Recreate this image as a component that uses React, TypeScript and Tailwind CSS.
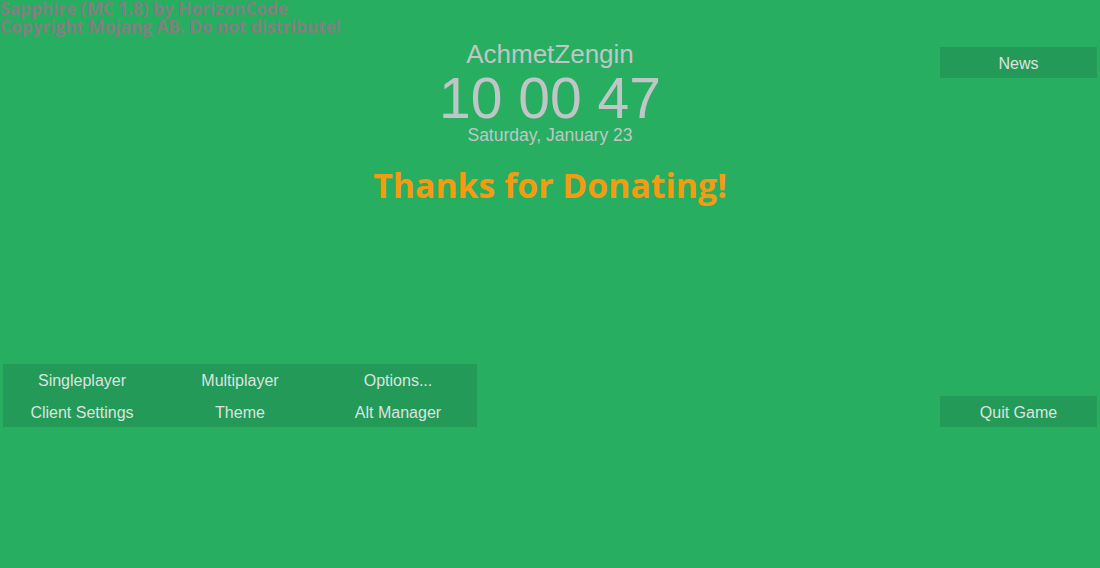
const menuItems = [
  "Singleplayer",
  "Multiplayer",
  "Options...",
  "Client Settings",
  "Theme",
  "Alt Manager",
];

function MenuButton({ label, className = "" }: { label: string; className?: string }) {
  return (
    <button
      className={`flex items-center justify-center bg-[#239a57] pt-[2px] font-['Liberation_Sans',Arial,sans-serif] text-[16px] text-[#dde3e0] ${className}`}
    >
      {label}
    </button>
  );
}

export default function App() {
  return (
    <div className="flex h-[568px] w-[1100px] flex-col overflow-hidden bg-[#27ae60]">
      <div className="grid h-[364px] grid-cols-[1fr_auto_1fr]">
        <div className="font-['Open_Sans',sans-serif] text-[17.2px] font-bold leading-[18px] text-[#808080]">
          <div>Sapphire (MC 1.8) by HorizonCode</div>
          <div>Copyright Mojang AB. Do not distribute!</div>
        </div>

        <div className="flex flex-col items-center pt-[40px] font-['Liberation_Sans',Arial,sans-serif] text-[#c0c6c8]">
          <div className="text-[26px] leading-[28px]">AchmetZengin</div>
          <div className="mt-[2px] text-[57px] leading-[57px]">10 00 47</div>
          <div className="text-[17.5px] leading-[16px]">Saturday, January 23</div>
          <div className="mt-[22px] font-['Open_Sans',sans-serif] text-[33.8px] font-bold leading-[40px] text-[#f39c12]">
            Thanks for Donating!
          </div>
        </div>

        <div className="flex items-start justify-end pr-[3px] pt-[47px]">
          <MenuButton label="News" className="h-[31px] w-[157px]" />
        </div>
      </div>

      <div className="flex items-end justify-between px-[3px]">
        <div className="grid w-[474px] grid-cols-3 grid-rows-[32px_31px] bg-[#239a57]">
          {menuItems.map((item) => (
            <MenuButton key={item} label={item} />
          ))}
        </div>
        <MenuButton label="Quit Game" className="h-[31px] w-[157px]" />
      </div>
    </div>
  );
}
